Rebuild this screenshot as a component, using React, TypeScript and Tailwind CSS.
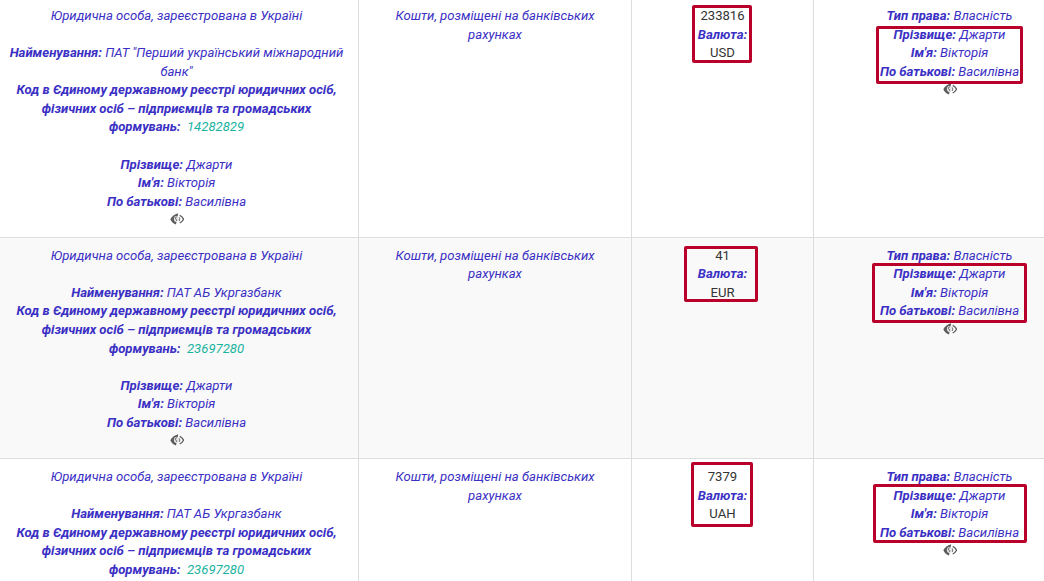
const EyeOff = () => (
  <div className="h-[18.57px] flex justify-center items-start pt-[0.5px]">
    <svg viewBox="0 0 14 13" className="w-[14px] h-[13px]" aria-hidden="true">
      <path d="M8.2 1.2 6 12.4C3.6 12 1.7 10 .3 7.2 2 4.2 4.4 2.2 8.2 1.2z" fill="#5c5c5c" />
      <ellipse cx="6.4" cy="7" rx="2.5" ry="2.9" fill="#e4e4e4" />
      <path d="M6.8 4.9c-1.2 0-1.7 1-1.2 1.9.4.7 1.2 1 1.1 2" stroke="#5c5c5c" strokeWidth="1" fill="none" />
      <path d="M9.7 3.4c1.6.7 2.9 2 3.9 3.8-1 1.8-2.3 3.1-3.9 3.8" stroke="#5c5c5c" strokeWidth="1.3" fill="none" />
      <path d="M9.2 5.4c.7 1.1.7 2.4 0 3.5" stroke="#5c5c5c" strokeWidth="1" fill="none" />
    </svg>
  </div>
);

const Bx = ({ label, value }: { label: string; value: string }) => (
  <div>
    <b className="font-bold">{label}</b> {value}
  </div>
);

const Person = () => (
  <>
    <Bx label="Прізвище:" value="Джарти" />
    <Bx label="Ім'я:" value="Вікторія" />
    <Bx label="По батькові:" value="Василівна" />
  </>
);

const rows = [
  {
    name: 'ПАТ "Перший український міжнародний банк"',
    code: "14282829",
    amount: "233816",
    cur: "USD",
    bg: "",
  },
  { name: "ПАТ АБ Укргазбанк", code: "23697280", amount: "41", cur: "EUR", bg: "bg-[#f9f9f9]" },
  { name: "ПАТ АБ Укргазбанк", code: "23697280", amount: "7379", cur: "UAH", bg: "" },
];

const marks = [
  "left-[692px] top-[5px] w-[60px] h-[58px]",
  "left-[876px] top-[26px] w-[147px] h-[58px]",
  "left-[684px] top-[246px] w-[74px] h-[56px]",
  "left-[872px] top-[263px] w-[155px] h-[60px]",
  "left-[691px] top-[462px] w-[62px] h-[65px]",
  "left-[873px] top-[484px] w-[154px] h-[59px]",
];

export default function App() {
  return (
    <div
      className="relative w-[1044px] h-[581px] overflow-hidden bg-white text-[13.12px] leading-[18.57px] text-[#333333]"
      style={{ fontFamily: "Roboto, 'Noto Sans', sans-serif" }}
    >
      <table className="table-fixed border-collapse w-[1090px] -ml-[5px] -mt-[3px]">
        <colgroup>
          <col className="w-[363.5px]" />
          <col className="w-[273px]" />
          <col className="w-[182px]" />
          <col className="w-[271.5px]" />
        </colgroup>
        <tbody>
          {rows.map((r, i) => (
            <tr key={i} className={r.bg}>
              <td className="align-top text-center italic px-[12px] pt-[9px] pb-[7px] border-y border-r border-[#dddddd] text-[#3b30c4]">
                <div>Юридична особа, зареєстрована в Україні</div>
                <br />
                <div>
                  <b>Найменування:</b> {r.name}
                </div>
                <div>
                  <b>Код в Єдиному державному реєстрі юридичних осіб, фізичних осіб – підприємців та громадських формувань:</b>
                  {"\u00a0 "}
                  <span className="text-[#1ab3a0]">{r.code}</span>
                </div>
                <br />
                <Person />
                <EyeOff />
              </td>
              <td className="align-top text-center italic px-[24px] pt-[9px] pb-[7px] border border-[#dddddd] text-[#3b30c4]">
                Кошти, розміщені на банківських рахунках
              </td>
              <td className="align-top text-center px-2 pt-[9px] pb-[7px] border border-[#dddddd]">
                <div>{r.amount}</div>
                <b className="block italic text-[#3b30c4]">Валюта:</b>
                <div>{r.cur}</div>
              </td>
              <td className="align-top text-center italic px-2 pt-[9px] pb-[7px] border-y border-l border-[#dddddd] text-[#3b30c4]">
                <Bx label="Тип права:" value="Власність" />
                <Person />
                <EyeOff />
              </td>
            </tr>
          ))}
        </tbody>
      </table>
      {marks.map((m) => (
        <div key={m} className={`absolute ${m} border-[3px] border-[#b8002a] rounded-[2px]`} />
      ))}
    </div>
  );
}
